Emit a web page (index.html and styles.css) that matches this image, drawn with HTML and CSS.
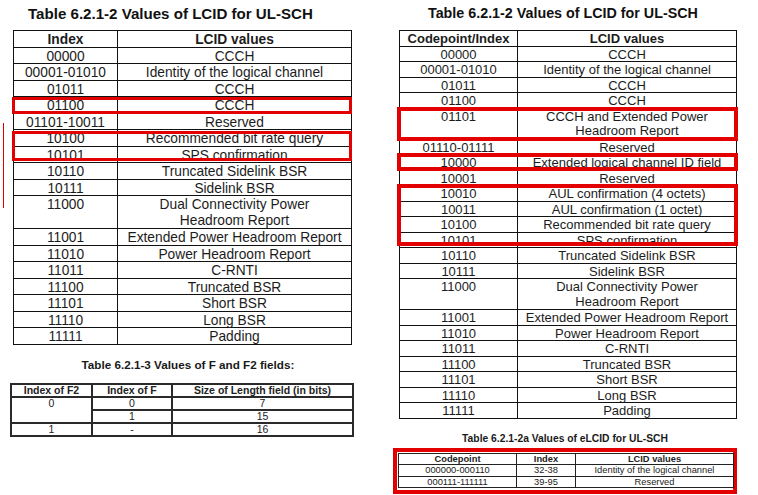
FILE: index.html
```html
<!DOCTYPE html>
<html>
<head>
<meta charset="utf-8">
<link rel="stylesheet" href="styles.css">
</head>
<body>
<div class="page">
  <section class="col col-left">
    <h2 class="title title-left">Table 6.2.1-2 Values of LCID for UL-SCH</h2>
    <div class="tablewrap">
      <table class="lcid lcid-left">
        <colgroup><col class="c1"><col class="c2"></colgroup>
        <tr class="head"><th>Index</th><th>LCID values</th></tr>
        <tr><td>00000</td><td>CCCH</td></tr>
        <tr><td>00001-01010</td><td>Identity of the logical channel</td></tr>
        <tr><td>01011</td><td>CCCH</td></tr>
        <tr><td>01100</td><td>CCCH</td></tr>
        <tr><td>01101-10011</td><td>Reserved</td></tr>
        <tr><td>10100</td><td>Recommended bit rate query</td></tr>
        <tr><td>10101</td><td>SPS confirmation</td></tr>
        <tr><td>10110</td><td>Truncated Sidelink BSR</td></tr>
        <tr><td>10111</td><td>Sidelink BSR</td></tr>
        <tr class="dbl"><td>11000</td><td>Dual Connectivity Power<br>Headroom Report</td></tr>
        <tr><td>11001</td><td>Extended Power Headroom Report</td></tr>
        <tr><td>11010</td><td>Power Headroom Report</td></tr>
        <tr><td>11011</td><td>C-RNTI</td></tr>
        <tr><td>11100</td><td>Truncated BSR</td></tr>
        <tr><td>11101</td><td>Short BSR</td></tr>
        <tr><td>11110</td><td>Long BSR</td></tr>
        <tr><td>11111</td><td>Padding</td></tr>
      </table>
      <div class="mark mark-l1"></div>
      <div class="mark mark-l2"></div>
      <div class="redline"></div>
    </div>

    <h3 class="subtitle sub-f">Table 6.2.1-3 Values of F and F2 fields:</h3>
    <table class="ftable">
      <colgroup><col class="f1"><col class="f2"><col class="f3"></colgroup>
      <tr class="head"><th>Index of F2</th><th>Index of F</th><th>Size of Length field (in bits)</th></tr>
      <tr><td rowspan="2">0</td><td>0</td><td>7</td></tr>
      <tr><td>1</td><td>15</td></tr>
      <tr><td>1</td><td>-</td><td>16</td></tr>
    </table>
  </section>

  <section class="col col-right">
    <h2 class="title title-right">Table 6.2.1-2 Values of LCID for UL-SCH</h2>
    <div class="tablewrap wrap-right">
      <table class="lcid lcid-right">
        <colgroup><col class="r1"><col class="r2"></colgroup>
        <tr class="head"><th>Codepoint/Index</th><th>LCID values</th></tr>
        <tr><td>00000</td><td>CCCH</td></tr>
        <tr><td>00001-01010</td><td>Identity of the logical channel</td></tr>
        <tr><td>01011</td><td>CCCH</td></tr>
        <tr><td>01100</td><td>CCCH</td></tr>
        <tr class="dbl"><td>01101</td><td>CCCH and Extended Power<br>Headroom Report</td></tr>
        <tr><td>01110-01111</td><td>Reserved</td></tr>
        <tr><td>10000</td><td>Extended logical channel ID field</td></tr>
        <tr><td>10001</td><td>Reserved</td></tr>
        <tr><td>10010</td><td>AUL confirmation (4 octets)</td></tr>
        <tr><td>10011</td><td>AUL confirmation (1 octet)</td></tr>
        <tr><td>10100</td><td>Recommended bit rate query</td></tr>
        <tr><td>10101</td><td>SPS confirmation</td></tr>
        <tr><td>10110</td><td>Truncated Sidelink BSR</td></tr>
        <tr><td>10111</td><td>Sidelink BSR</td></tr>
        <tr class="dbl"><td>11000</td><td>Dual Connectivity Power<br>Headroom Report</td></tr>
        <tr><td>11001</td><td>Extended Power Headroom Report</td></tr>
        <tr><td>11010</td><td>Power Headroom Report</td></tr>
        <tr><td>11011</td><td>C-RNTI</td></tr>
        <tr><td>11100</td><td>Truncated BSR</td></tr>
        <tr><td>11101</td><td>Short BSR</td></tr>
        <tr><td>11110</td><td>Long BSR</td></tr>
        <tr><td>11111</td><td>Padding</td></tr>
      </table>
      <div class="mark mark-r mark-r1"></div>
      <div class="mark mark-r mark-r2"></div>
      <div class="mark mark-r mark-r3"></div>
    </div>

    <h3 class="subtitle sub-e">Table 6.2.1-2a Values of eLCID for UL-SCH</h3>
    <div class="ebox">
      <table class="etable">
        <colgroup><col class="e1"><col class="e2"><col class="e3"></colgroup>
        <tr class="head"><th>Codepoint</th><th>Index</th><th>LCID values</th></tr>
        <tr><td>000000-000110</td><td>32-38</td><td>Identity of the logical channel</td></tr>
        <tr><td>000111-111111</td><td>39-95</td><td>Reserved</td></tr>
      </table>
    </div>
  </section>
</div>
</body>
</html>
```

FILE: styles.css
```css
* { box-sizing: border-box; }
html, body { margin: 0; padding: 0; background: #fff; }
body {
  font-family: "Liberation Sans", Arial, sans-serif;
  color: #1c1c1c;
  width: 758px;
  height: 495px;
  overflow: hidden;
}
.page { display: flex; align-items: flex-start; }
.col { display: flex; flex-direction: column; align-items: flex-start; }
.col-left { width: 380px; padding-left: 13px; }
.col-right { width: 378px; padding-left: 13px; }

.title { margin: 0; font-weight: bold; white-space: nowrap; color: #111; }
.title-left { font-size: 15.1px; line-height: 17px; height: 30px; padding: 5px 0 0 15px; }
.title-right { font-size: 14.3px; line-height: 17px; height: 30px; padding: 5px 0 0 35px; }

.tablewrap { position: relative; }
.wrap-right { margin-left: 6px; }

table { border-collapse: collapse; table-layout: fixed; }
th, td { padding: 0; text-align: center; vertical-align: top; white-space: nowrap; }

.lcid th, .lcid td { border: 1px solid #111; }
.lcid th { font-weight: bold; }

.lcid-left { width: 338px; font-size: 13.75px; }
.lcid-left .c1 { width: 104px; }
.lcid-left .c2 { width: 234px; }
.lcid-left tr { height: 16.5px; }
.lcid-left td, .lcid-left th { line-height: 13.5px; padding-top: 2px; }
.lcid-left tr.dbl { height: 33px; }
.lcid-left tr.dbl td { line-height: 15.5px; padding-top: 1px; }

.lcid-right { width: 337px; font-size: 13px; }
.lcid-right .r1 { width: 118px; }
.lcid-right .r2 { width: 219px; }
.lcid-right tr { height: 15.5px; }
.lcid-right td, .lcid-right th { line-height: 12.5px; padding-top: 2px; }
.lcid-right tr.dbl { height: 31px; }
.lcid-right tr.dbl td { line-height: 14.5px; padding-top: 1px; }

.mark { position: absolute; border: 3px solid #e30000; }
.mark-r { border-width: 4px; }
.mark-l1 { left: -1px; top: 67px; width: 340px; height: 17px; }
.mark-l2 { left: -1px; top: 101px; width: 340px; height: 30px; }
.redline { position: absolute; left: -10px; top: 93px; width: 1px; height: 85px; background: #e30000; }
.mark-r1 { left: -2px; top: 77px; width: 341px; height: 34px; }
.mark-r2 { left: -2px; top: 123px; width: 341px; height: 18px; }
.mark-r3 { left: -2px; top: 154px; width: 341px; height: 62px; }

.subtitle { margin: 0; font-weight: bold; white-space: nowrap; color: #1a1a1a; }
.sub-f { font-size: 11.7px; line-height: 14px; margin-top: 13px; align-self: stretch; text-align: center; padding-right: 17px; }

.ftable { margin-left: -3px; margin-top: 11px; width: 342px; font-size: 10.5px; line-height: 11px; color: #222; }
.ftable .f1 { width: 81px; }
.ftable .f2 { width: 80px; }
.ftable .f3 { width: 181px; }
.ftable th, .ftable td { border: 2px solid #2a2a2a; }
.ftable tr { height: 13px; }
.ftable tr.head { height: 12px; }

.sub-e { font-size: 10.3px; line-height: 12px; margin-top: 14px; width: 344px; text-align: center; }
.ebox { margin-top: 3px; width: 344px; border: 4px solid #e30000; padding: 1px 0 2px 1px; }
.etable { width: 335px; font-size: 9.3px; line-height: 10px; color: #222; }
.etable .e1 { width: 118px; }
.etable .e2 { width: 59px; }
.etable .e3 { width: 158px; }
.etable th, .etable td { border: 1.5px solid #222; }
.etable tr { height: 11.5px; }
```
